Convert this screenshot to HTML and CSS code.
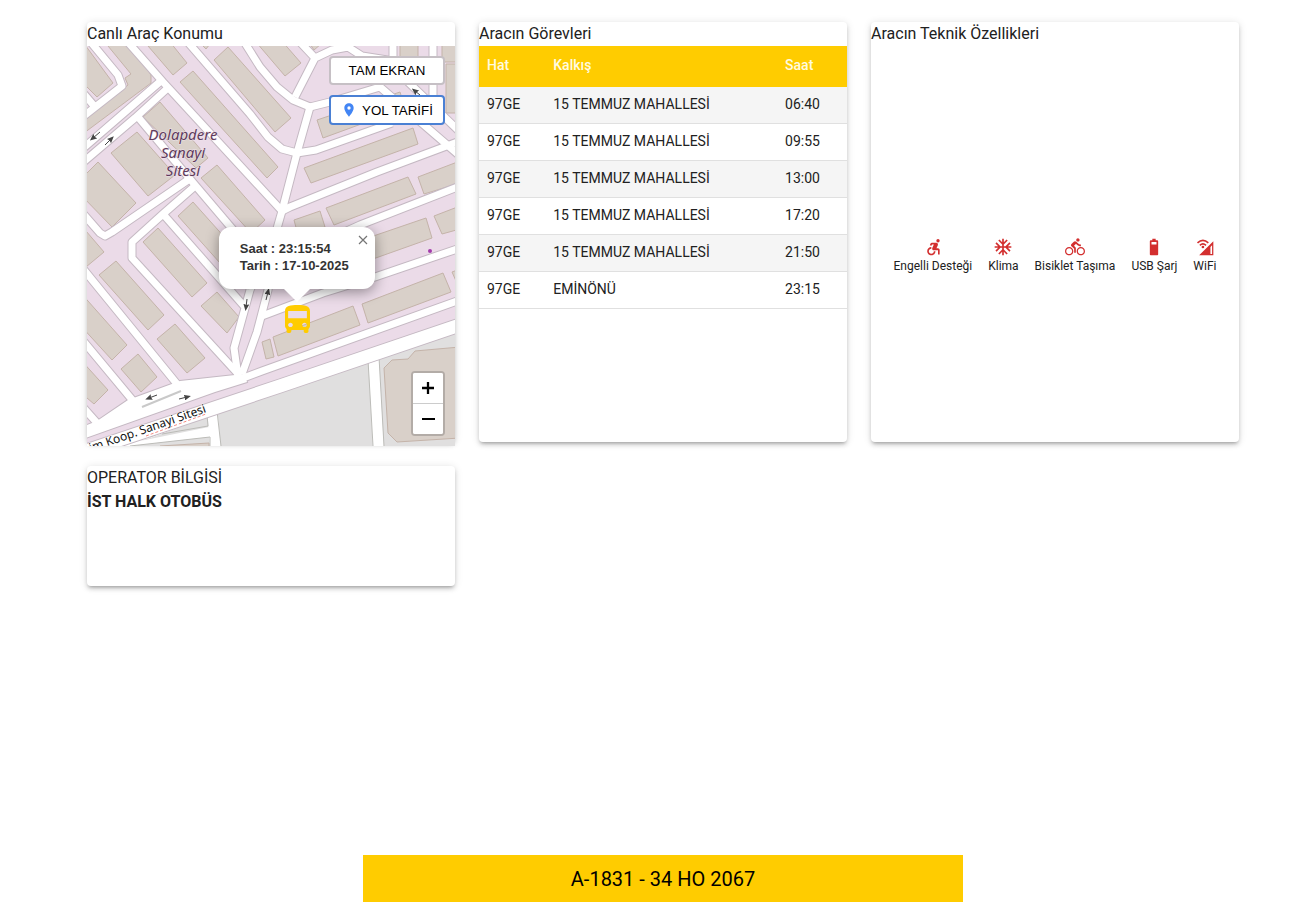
FILE: index.html
```html
<!DOCTYPE html>
<html lang="tr">
<head>
<meta charset="utf-8">
<meta name="viewport" content="width=device-width, initial-scale=1">
<title>A-1831 - 34 HO 2067</title>
<link rel="stylesheet" href="styles.css">
</head>
<body>
<div class="page">
  <main class="cards">
    <section class="card">
      <h2 class="card-title">Canlı Araç Konumu</h2>
      <div class="map">
        <svg class="map-canvas" viewBox="87 46 368 400" preserveAspectRatio="xMidYMid slice" role="img" aria-label="Harita">
          <defs>
            <g id="streets">
              <path d="M126 40L163 82L282 211"/>
              <path d="M186 40L250 114L268 137L282 149L297 153L316 150L392 123"/>
              <path d="M243 40L260 67L277 87L293 100L310 107L330 102L380 87L460 156"/>
              <path d="M310 107L297 153L282 211L276 232"/>
              <path d="M298 40L315 58L295 97M315 58L332 50L348 47L362 56L400 62"/>
              <path d="M393 40V66M433 40V100M404 78L460 132"/>
              <path d="M162 80L80 151M170 86L135 118L80 165"/>
              <path d="M138 117L195 185L240 238"/>
              <path d="M195 186L163 214L132 242V258L240 376M163 214L244 306"/>
              <path d="M188 180L112 232L105 236L100 233L80 210"/>
              <path d="M282 211L290 207L377 172L460 141"/>
              <path d="M340 234L360 225L460 186"/>
              <path d="M262 316L323 293L375 277L460 248"/>
              <path d="M250 290L234 348L238 376M276 232L268 290L257 332L242 374M276 232L250 290"/>
              <path d="M80 265L177 384M80 337L134 402M80 404L98 424"/>
              <path d="M89 40L118 75L122 86L80 119M84 94L95 107"/>
              <path d="M238 380L262 371L460 300"/>
            </g>
            <path id="boulevard" d="M80 453L280 386L460 325"/>
            <path id="junction" d="M80 428L97 421L128 400L180 381L235 375L244 374L247 382L215 392L80 440Z"/>
            <marker id="head" markerUnits="userSpaceOnUse" markerWidth="7" markerHeight="6" refX="3" refY="3" orient="auto"><path d="M0 0L7 3L0 6L1 3Z" fill="#444"/></marker>
          </defs>
          <rect class="land" x="0" y="0" width="600" height="500"/>
          <g class="buildings">
            <path d="M112 40L133 46L151 75V83L80 136V124L128 85L125 78L131 74L108 46Z"/>
            <path d="M80 38L113 83L97 97L80 80Z"/>
            <path d="M148 46L173 75L187 63L170 42Z"/>
            <path d="M193 71L278 167L267 178L180 82Z"/>
            <path d="M228 47L291 118L275 132L214 60Z"/>
            <path d="M256 42L285 76L301 63L281 40Z"/>
            <path d="M160 102L208 158L196 168L143 117Z"/>
            <path d="M137 132L175 175L148 196L111 153Z"/>
            <path d="M98 162L136 203L112 227L80 194V180Z"/>
            <path d="M217 165L265 220L251 233L201 178Z"/>
            <path d="M193 202L235 249L220 263L178 216Z"/>
            <path d="M158 228L207 283L192 297L143 242Z"/>
            <path d="M116 261L164 315L148 330L99 275Z"/>
            <path d="M175 324L205 358L187 373L157 339Z"/>
            <path d="M217 292L239 317L227 333L201 306Z"/>
            <path d="M80 292L127 345L112 360L80 325Z"/>
            <path d="M138 354L157 377L141 392L121 369Z"/>
            <path d="M80 359L108 390L94 404L80 392Z"/>
            <path d="M80 224L104 252L80 272Z"/>
            <path d="M317 120L400 92L405 108L323 138Z"/>
            <path d="M304 168L413 128L418 144L311 183Z"/>
            <path d="M326 208L408 177L416 194L334 225Z"/>
            <path d="M418 177L460 161V183L424 194Z"/>
            <path d="M294 220L320 211L325 227L298 235Z"/>
            <path d="M350 244L426 218L432 238L356 265Z"/>
            <path d="M434 216L460 206V229L442 234Z"/>
            <path d="M362 304L443 273L451 292L368 323Z"/>
            <path d="M273 337L353 306L360 325L278 356Z"/>
            <path d="M262 342L270 339L274 357L266 359Z"/>
            <path d="M452 272L460 269V290Z"/>
            <path d="M400 40H418V60H400ZM442 40H460V62H442ZM446 64H460V113H446Z"/>
            <path d="M310 44L321 44L314 50ZM203 46L206 49L210 44Z"/>
          </g>
          <use href="#streets" class="casing"/>
          <use href="#junction" class="junction-edge"/>
          <use href="#streets" class="street"/>
          <use href="#junction" class="junction"/>
          <path class="block" d="M217 411L455 325H470V450H60V455L207 412Z"/>
          <path class="street-fill" d="M207 405H217L221 450H210ZM368 356H379L384 450H373ZM60 456L207 411L208 417L150 438L60 462ZM145 440L209 427V437L130 446H100Z"/>
          <path class="edge" d="M217 411L368 360L373 446M221 446L217 411M384 446L379 357L455 331M219 412L368 362M381 357L455 333M150 437L207 415L208 426L162 434M130 446L210 437V446"/>
          <use href="#boulevard" class="boulevard-casing"/>
          <use href="#boulevard" class="boulevard"/>
          <g class="buildings"><path d="M460 347L415 351L408 359L392 360L384 368L388 433L397 442L460 438Z"/><path d="M160 446L209 443V450H160Z"/></g>
          <path class="median" d="M142 407L181 391"/>
          <path class="red-dots" d="M146 436L206 414"/>
          <g class="arrows">
            <path d="M100 132L93 138"/><path d="M105 145L111 139"/>
            <path d="M157 395L149 398"/><path d="M179 399L187 397"/>
            <path d="M247 299L246 307"/><path d="M266 300L268 292"/>
            <path d="M420 95L415 91"/>
          </g>
          <circle cx="430" cy="251" r="2" fill="#a33bab"/>
          <g class="place"><text x="183" y="140">Dolapdere</text><text x="183" y="158">Sanayi</text><text x="183" y="176">Sitesi</text></g>
          <text class="road-name" transform="translate(85 454) rotate(-19)">yim Koop. Sanayi Sitesi</text>
        </svg>
        <div class="map-actions">
          <button class="map-button" type="button">TAM EKRAN</button>
          <button class="map-button map-button-route" type="button">
            <svg width="16" height="16" viewBox="0 0 24 24" aria-hidden="true"><path fill="#4285f4" d="M12 2C8.130 2 5 5.130 5 9c0 5.250 7 13 7 13s7-7.750 7-13c0-3.870-3.130-7-7-7zm0 9.500a2.500 2.500 0 010-5 2.500 2.500 0 010 5z"/></svg>
            YOL TARİFİ
          </button>
        </div>
        <div class="popup">
          <p>Saat : 23:15:54</p>
          <p>Tarih : 17-10-2025</p>
          <button class="popup-close" type="button" aria-label="Kapat"><svg width="10" height="10" viewBox="0 0 10 10"><path d="M1 1L9 9M9 1L1 9" stroke="#757575" stroke-width="1.200"/></svg></button>
        </div>
        <svg class="bus" viewBox="4 2 16 19" preserveAspectRatio="none" aria-label="Otobüs"><path fill="#fc0" d="M4 16c0 .88.39 1.670 1 2.220V20c0 .55.45 1 1 1h1c.55 0 1-.45 1-1v-1h8v1c0 .55.45 1 1 1h1c.55 0 1-.45 1-1v-1.780c.61-.55 1-1.340 1-2.220V6c0-3.500-3.580-4-8-4s-8 .5-8 4v10zm3.500 1c-.83 0-1.500-.67-1.500-1.500S6.670 14 7.500 14s1.500.67 1.500 1.500S8.330 17 7.500 17zm9 0c-.83 0-1.500-.67-1.500-1.500s.67-1.500 1.500-1.500 1.500.67 1.500 1.500-.67 1.500-1.500 1.500zm1.500-6H6V6h12v5z"/></svg>
        <div class="zoom">
          <button type="button" aria-label="Yakınlaştır"><svg width="14" height="14" viewBox="0 0 14 14"><path d="M7 1V13M1 7H13" stroke="#000" stroke-width="2.300"/></svg></button>
          <button type="button" aria-label="Uzaklaştır"><svg width="14" height="14" viewBox="0 0 14 14"><path d="M1 7H14" stroke="#000" stroke-width="2"/></svg></button>
        </div>
      </div>
    </section>

    <section class="card">
      <h2 class="card-title">Aracın Görevleri</h2>
      <table class="tasks">
        <thead><tr><th class="col-line">Hat</th><th class="col-from">Kalkış</th><th>Saat</th></tr></thead>
        <tbody>
          <tr><td>97GE</td><td>15 TEMMUZ MAHALLESİ</td><td>06:40</td></tr>
          <tr><td>97GE</td><td>15 TEMMUZ MAHALLESİ</td><td>09:55</td></tr>
          <tr><td>97GE</td><td>15 TEMMUZ MAHALLESİ</td><td>13:00</td></tr>
          <tr><td>97GE</td><td>15 TEMMUZ MAHALLESİ</td><td>17:20</td></tr>
          <tr><td>97GE</td><td>15 TEMMUZ MAHALLESİ</td><td>21:50</td></tr>
          <tr><td>97GE</td><td>EMİNÖNÜ</td><td>23:15</td></tr>
        </tbody>
      </table>
    </section>

    <section class="card">
      <h2 class="card-title">Aracın Teknik Özellikleri</h2>
      <ul class="features">
        <li><svg viewBox="0 0 24 24"><circle cx="18" cy="4.500" r="2"/><path d="M15 17h-2c0 1.650-1.350 3-3 3s-3-1.350-3-3 1.350-3 3-3v-2c-2.760 0-5 2.240-5 5s2.240 5 5 5 5-2.240 5-5zm3-3.500h-1.860l1.670-3.670C18.420 8.500 17.440 7 15.960 7h-5.200c-.81 0-1.540.47-1.870 1.200L8.220 10l1.920.53.65-1.530H13l-1.830 4.100c-.6 1.330.39 2.900 1.850 2.900H18v5h2v-5.500c0-1.100-.9-2-2-2z"/></svg>Engelli Desteği</li>
        <li><svg viewBox="0 0 24 24"><path d="M22 11h-4.170l3.240-3.240-1.410-1.420L15 11h-2V9l4.660-4.660-1.420-1.410L13 6.170V2h-2v4.170L7.760 2.930 6.340 4.340 11 9v2H9L4.340 6.340 2.930 7.760 6.170 11H2v2h4.170l-3.240 3.240 1.410 1.420L9 13h2v2l-4.660 4.660 1.420 1.410L11 17.830V22h2v-4.170l3.240 3.240 1.420-1.410L13 15v-2h2l4.660 4.660 1.410-1.420L17.830 13H22z"/></svg>Klima</li>
        <li><svg viewBox="0 0 24 24"><path d="M15.500 5.500c1.100 0 2-.9 2-2s-.9-2-2-2-2 .9-2 2 .9 2 2 2zM5 12c-2.800 0-5 2.200-5 5s2.200 5 5 5 5-2.200 5-5-2.200-5-5-5zm0 8.500c-1.900 0-3.500-1.600-3.500-3.500s1.600-3.500 3.500-3.500 3.500 1.600 3.500 3.500-1.600 3.500-3.500 3.500zm5.800-10l2.400-2.400.8.8c1.300 1.300 3 2.100 5.100 2.100V9c-1.500 0-2.700-.6-3.600-1.500l-1.900-1.900c-.5-.4-1-.6-1.600-.6s-1.100.2-1.400.6L7.800 8.400c-.4.4-.6.9-.6 1.400 0 .6.2 1.100.6 1.400L11 14v5h2v-6.200l-2.200-2.300zM19 12c-2.800 0-5 2.200-5 5s2.200 5 5 5 5-2.200 5-5-2.200-5-5-5zm0 8.500c-1.900 0-3.500-1.600-3.500-3.500s1.600-3.500 3.500-3.500 3.500 1.600 3.500 3.500-1.600 3.500-3.500 3.500z"/></svg>Bisiklet Taşıma</li>
        <li><svg viewBox="0 0 24 24"><path fill-rule="evenodd" d="M17 5.300C17 4.600 16.400 4 15.700 4H14V2h-4v2H8.300C7.600 4 7 4.600 7 5.300v15.400c0 .7.6 1.300 1.300 1.300h7.400c.7 0 1.300-.6 1.300-1.300zM9 6h6v3H9z"/></svg>USB Şarj</li>
        <li><svg viewBox="0 0 24 24"><path fill-rule="evenodd" d="M22 5V22H5zM20.500 10V20.500H18.500V12z"/><path d="M3 7Q9.500 1 16 7M5.800 10Q9.500 6.500 13.200 10" fill="none" stroke="#d32f2f" stroke-width="1.900"/><circle cx="9.500" cy="12" r="1.600"/></svg>WiFi</li>
      </ul>
    </section>

    <section class="card card-short">
      <h2 class="card-title">OPERATOR BİLGİSİ</h2>
      <p class="operator">İST HALK OTOBÜS</p>
    </section>
  </main>
  <footer class="vehicle">A-1831 - 34 HO 2067</footer>
</div>
</body>
</html>
```
FILE: styles.css
```css
* { box-sizing: border-box; }
body { margin: 0; background: #fff; color: #212121; font: 16px/24px Roboto, sans-serif; }
p, h2, ul { margin: 0; padding: 0; }
button { margin: 0; padding: 0; cursor: pointer; }

.page { display: flex; flex-direction: column; align-items: center; min-height: 100vh; padding: 22px 0 0 12px; }
.cards { display: grid; grid-template-columns: repeat(auto-fit, minmax(320px, 1fr)); gap: 24px; align-items: start; width: 100%; max-width: 1200px; padding: 0 24px; }
.card { display: flex; flex-direction: column; height: 420px; min-width: 0; background: #fff; border-radius: 4px; box-shadow: 0 3px 3px -2px rgba(0,0,0,.2), 0 3px 4px rgba(0,0,0,.14), 0 1px 8px rgba(0,0,0,.12); }
.card-short { height: 120px; }
.card-title { font-size: 16px; font-weight: 400; }
.operator { font-weight: 700; }

.map { position: relative; flex: none; height: 400px; overflow: hidden; background: #ebdbe8; }
.map-canvas { display: block; width: 100%; height: 100%; }
.land { fill: #ebdbe8; }
.buildings { fill: #d9d0c9; stroke: #c4b3a9; stroke-width: 1; }
.casing { fill: none; stroke: #c5b9c3; stroke-width: 9; stroke-linejoin: round; }
.street { fill: none; stroke: #fff; stroke-width: 7; stroke-linejoin: round; }
.junction-edge { fill: #fff; stroke: #c5b9c3; stroke-width: 2; }
.junction, .street-fill { fill: #fff; }
.block { fill: #e0dfdf; }
.edge { fill: none; stroke: #bcbcb8; }
.boulevard-casing { fill: none; stroke: #c5b9c3; stroke-width: 15; }
.boulevard { fill: none; stroke: #fff; stroke-width: 13; }
.median { stroke: #c9c9c9; stroke-width: 2; }
.red-dots { stroke: #f58a83; stroke-dasharray: 3 2; }
.arrows { fill: none; stroke: #444; stroke-width: 1; }
.arrows path { marker-end: url(#head); }
#head path { stroke: none; marker-end: none; }
.place { fill: #5f3c5c; stroke: #efe3ec; stroke-width: 1; paint-order: stroke; font: italic 15px "Noto Sans", sans-serif; text-anchor: middle; }
.road-name { fill: #111; stroke: #fff; stroke-width: 1; paint-order: stroke; font: 12px "Noto Sans", sans-serif; }

.map-actions { position: absolute; top: 10px; right: 10px; display: flex; flex-direction: column; gap: 10px; width: 116px; }
.map-button { display: flex; align-items: center; justify-content: center; gap: 5px; height: 29px; border: 2px solid #c6c0c5; border-radius: 4px; background: #fff; color: #000; font-family: "Liberation Sans", Arial, sans-serif; white-space: nowrap; }
.map-button-route { height: 30px; border-color: #4a80d4; }

.popup { position: absolute; top: 181px; left: 57%; width: 156px; height: 62px; margin-left: -78px; padding: 13px 21px; border-radius: 12px; background: #fff; box-shadow: 0 3px 14px rgba(0,0,0,.4); color: #333; font: bold 13px/17px "Liberation Sans", Arial, sans-serif; white-space: nowrap; }
.popup::after { content: ""; position: absolute; top: 100%; left: 50%; margin-left: -13px; border: 13px solid transparent; border-top-color: #fff; border-bottom: 0; }
.popup-close { position: absolute; top: 0; right: 0; display: grid; place-items: center; width: 24px; height: 25px; border: 0; background: none; }
.bus { position: absolute; top: 259px; left: 57%; width: 25px; height: 28px; margin-left: -12px; }

.zoom { position: absolute; right: 10px; bottom: 10px; width: 34px; border: 2px solid #b3aca7; border-radius: 4px; background: #fff; overflow: hidden; }
.zoom button { display: grid; place-items: center; width: 30px; height: 30px; border: 0; background: #fff; }
.zoom button:first-child { height: 31px; border-bottom: 1px solid #ccc; }

.tasks { width: 100%; border-collapse: separate; border-spacing: 0; table-layout: fixed; font-size: 14px; line-height: 24px; text-align: left; }
.col-line { width: 18%; }
.col-from { width: 63%; }
.tasks th { padding: 7px 8px 10px; background: #fc0; color: #fffbe0; font-weight: 500; }
.tasks td { padding: 5px 8px 7px; border-bottom: 1px solid #e0e0e0; }
.tasks tbody tr:nth-child(odd) { background: #f5f5f5; }

.features { flex: 1; display: flex; flex-wrap: wrap; align-items: center; align-content: center; justify-content: center; gap: 16px; padding-top: 24px; list-style: none; font-size: 12px; line-height: 18px; }
.features li { display: flex; flex-direction: column; align-items: center; }
.features svg { width: 20px; height: 20px; fill: #d32f2f; }

.vehicle { width: 600px; max-width: 100%; margin-top: auto; padding: 12px 0 11px; background: #fc0; color: #000; font-size: 20px; text-align: center; }
```
